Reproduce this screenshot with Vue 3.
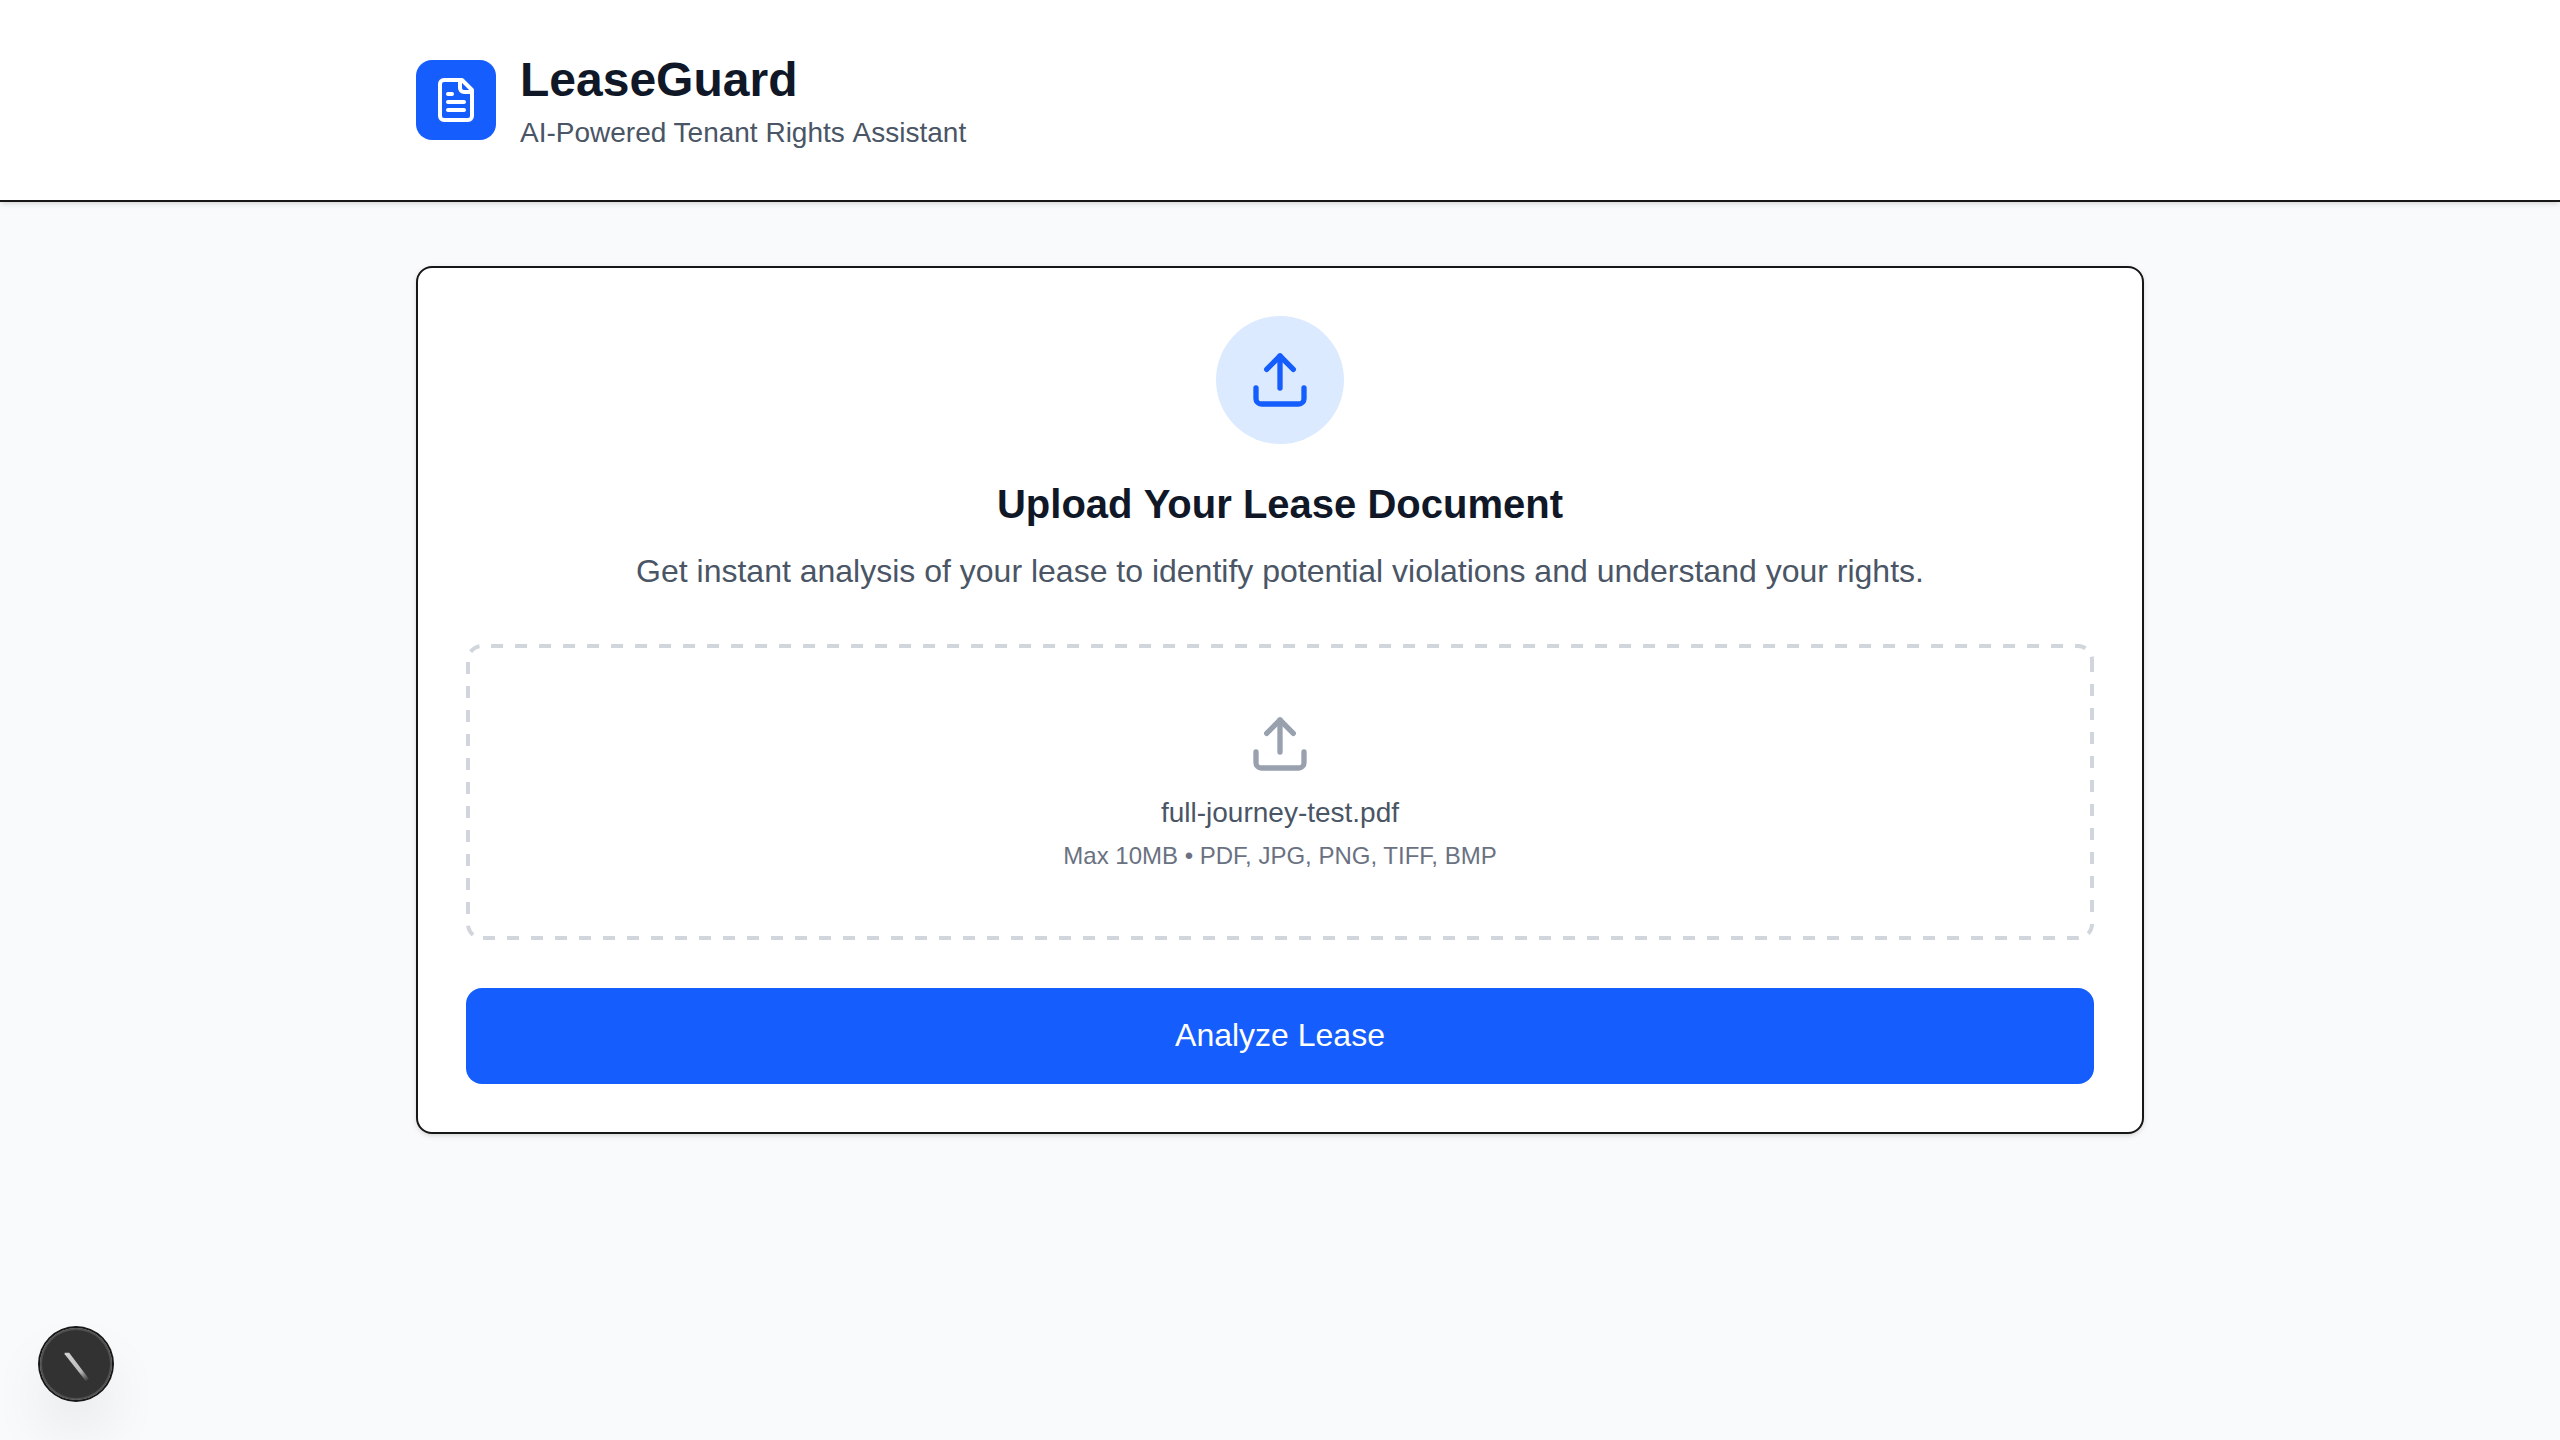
<script setup>
import { ref } from 'vue'

const fileName = ref('full-journey-test.pdf')
const uploadPaths = ['M12 3v12', 'm17 8-5-5-5 5', 'M21 15v4a2 2 0 0 1-2 2H5a2 2 0 0 1-2-2v-4']
const documentPaths = [
  'M15 2H6a2 2 0 0 0-2 2v16a2 2 0 0 0 2 2h12a2 2 0 0 0 2-2V7Z',
  'M14 2v4a2 2 0 0 0 2 2h4',
  'M10 9H8',
  'M16 13H8',
  'M16 17H8',
]
</script>

<template>
  <div class="page">
    <header class="header">
      <div class="container brand">
        <div class="logo">
          <svg class="icon logo-icon" viewBox="0 0 24 24">
            <path v-for="d in documentPaths" :key="d" :d="d" />
          </svg>
        </div>
        <div>
          <h1 class="brand-name">LeaseGuard</h1>
          <p class="tagline">AI-Powered Tenant Rights <span class="word">Assistant</span></p>
        </div>
      </div>
    </header>

    <main class="container main">
      <section class="card">
        <div class="badge">
          <svg class="icon upload-icon" viewBox="0 0 24 24">
            <path v-for="d in uploadPaths" :key="d" :d="d" />
          </svg>
        </div>
        <h2 class="title">Upload <span class="word">Your</span> Lease Document</h2>
        <p class="description">
          Get instant analysis of your lease to identify potential violations and understand your rights.
        </p>
        <div class="dropzone">
          <!-- Dashed outline: stroked at double width along the outer edge, the outside half is clipped -->
          <svg class="outline" viewBox="0 0 1628 296">
            <path
              d="M1628 16V280A16 16 0 0 1 1612 296H16A16 16 0 0 1 0 280V16A16 16 0 0 1 16 0H1612A16 16 0 0 1 1628 16"
            />
          </svg>
          <svg class="icon upload-icon muted" viewBox="0 0 24 24">
            <path v-for="d in uploadPaths" :key="d" :d="d" />
          </svg>
          <p class="file-name">{{ fileName }}</p>
          <p class="hint">Max 10MB • PDF, JPG, PNG, TIFF, BMP</p>
        </div>
        <button class="submit" type="button">Analyze Lease</button>
      </section>
    </main>

    <div class="dev-indicator">
      <svg viewBox="0 0 72 72" width="72" height="72">
        <defs>
          <linearGradient id="stroke-fade" gradientUnits="userSpaceOnUse" x1="27" y1="25" x2="48" y2="53">
            <stop offset="0" stop-color="#fff" stop-opacity="0.78" />
            <stop offset="0.65" stop-color="#fff" stop-opacity="0.66" />
            <stop offset="1" stop-color="#fff" stop-opacity="0" />
          </linearGradient>
        </defs>
        <path d="M24.7 26.2V24.7H29.2L49 51L46 53.3Z" fill="url(#stroke-fade)" />
      </svg>
    </div>
  </div>
</template>

<style>
body {
  margin: 0;
  background: #f9fafb;
}
</style>

<style scoped>
.page {
  min-height: 1440px;
  background: #f9fafb;
  font-family: "Liberation Sans", Arial, sans-serif;
}
.page * {
  box-sizing: border-box;
}
h1,
h2,
p {
  margin: 0;
}
.container {
  width: 1792px;
  margin: 0 auto;
  padding: 0 32px;
}
.header {
  padding: 48px 0;
  background: #fff;
  border-bottom: 2px solid #171717;
  box-shadow: 0 2px 6px 0 rgba(0, 0, 0, 0.1), 0 2px 4px -2px rgba(0, 0, 0, 0.1);
}
.brand {
  display: flex;
  align-items: center;
  gap: 24px;
}
.logo {
  display: flex;
  align-items: center;
  justify-content: center;
  width: 80px;
  height: 80px;
  border-radius: 16px;
  background: #155dfc;
  color: #fff;
}
.icon {
  display: block;
  fill: none;
  stroke: currentColor;
  stroke-width: 2;
  stroke-linecap: round;
  stroke-linejoin: round;
}
.logo-icon {
  width: 48px;
  height: 48px;
}
.brand-name {
  font-size: 48px;
  line-height: 64px;
  font-weight: 700;
  color: #101828;
}
.tagline {
  margin-bottom: -2px;
  font-size: 28px;
  line-height: 42px;
  color: #4a5565;
}
/* Keeps the preceding space at full width, without kerning into the capital */
.word {
  display: inline-block;
}
.main {
  padding-top: 64px;
}
.card {
  display: flex;
  flex-direction: column;
  align-items: center;
  padding: 48px;
  border: 2px solid #171717;
  border-radius: 16px;
  background: #fff;
  box-shadow: 0 2px 6px 0 rgba(0, 0, 0, 0.1), 0 2px 4px -2px rgba(0, 0, 0, 0.1);
}
.badge {
  display: flex;
  align-items: center;
  justify-content: center;
  width: 128px;
  height: 128px;
  border-radius: 50%;
  background: #dbeafe;
  color: #155dfc;
}
.upload-icon {
  width: 64px;
  height: 64px;
}
.muted {
  color: #99a1af;
}
.title {
  margin-top: 32px;
  font-size: 40px;
  line-height: 56px;
  font-weight: 700;
  color: #101828;
}
.description {
  margin-top: 16px;
  font-size: 32px;
  line-height: 46px;
  color: #4a5565;
}
.dropzone {
  position: relative;
  display: flex;
  flex-direction: column;
  align-items: center;
  width: 100%;
  margin-top: 50px;
  padding: 68px;
}
.outline {
  position: absolute;
  inset: 0;
  width: 100%;
  height: 100%;
  overflow: hidden;
  border-radius: 16px;
  fill: none;
  stroke: #d1d5dc;
  stroke-width: 8;
  stroke-dasharray: 12 12;
}
.file-name {
  margin-top: 16px;
  font-size: 28px;
  line-height: 42px;
  color: #4a5565;
}
.hint {
  margin-top: 6px;
  font-size: 24px;
  line-height: 32px;
  color: #6a7282;
}
.submit {
  width: 100%;
  height: 96px;
  margin-top: 48px;
  padding: 0 0 2px;
  border: 0;
  border-radius: 16px;
  background: #155dfc;
  color: #fff;
  font-family: inherit;
  font-size: 32px;
  line-height: 48px;
}
.dev-indicator {
  position: fixed;
  left: 40px;
  bottom: 40px;
  display: flex;
  width: 72px;
  height: 72px;
  border-radius: 50%;
  background: rgba(0, 0, 0, 0.8);
  box-shadow: 0 0 0 2px #171717, inset 0 0 0 2px rgba(255, 255, 255, 0.14),
    0 32px 64px -16px rgba(0, 0, 0, 0.24);
}
</style>
